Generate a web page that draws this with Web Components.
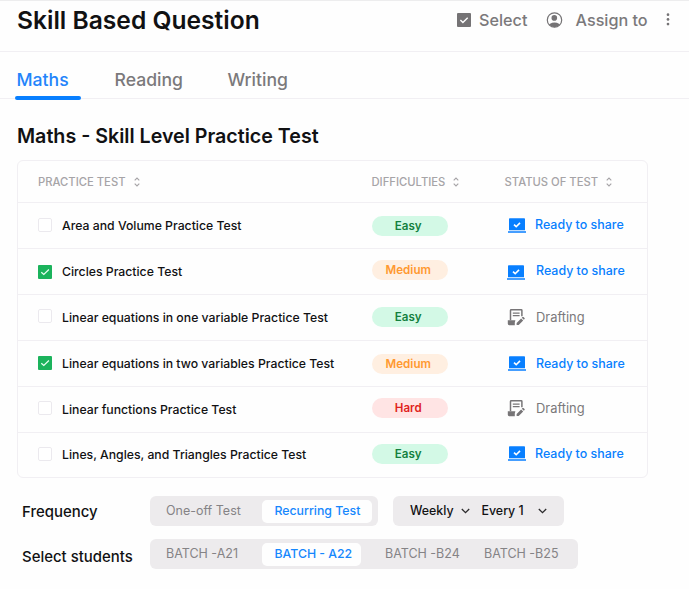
<!DOCTYPE html>
<html lang="en">

<head>
    <meta charset="UTF-8">
    <meta name="viewport" content="width=device-width, initial-scale=1.0">
    <title>Skill Based Question</title>
    <style>
        body {
            margin: 0;
            background: #fefefe;
            color: #111113;
            font-family: Inter, "Liberation Sans", sans-serif;
            --blue: #087fff;
            --grey: #7b797b;
            --line: #f1eff3;
        }
    </style>
</head>

<body>
    <skill-page></skill-page>

    <script>
        const define = (name, html, setup) => {
            customElements.define(name,
                class extends HTMLElement {
                    connectedCallback() {
                        if (this.shadowRoot) return;
                        const shadowRoot = this.attachShadow({ mode: "open" });
                        shadowRoot.innerHTML = html;
                        if (setup) setup(this, shadowRoot);
                    }
                });
        };

        const icons = {
            select: `<svg width="14" height="14" viewBox="0 0 14 14"><rect width="14" height="14" rx="1" fill="#757375"/><path d="M3.4 7.1 5.9 9.5 10.7 4.7" fill="none" stroke="#fff" stroke-width="1.4"/></svg>`,
            user: `<svg width="17" height="16" viewBox="0 0 17 16"><defs><clipPath id="c"><circle cx="8.5" cy="8" r="7.2"/></clipPath></defs><circle cx="8.5" cy="8" r="7.2" fill="none" stroke="#757375" stroke-width="1.2"/><circle cx="8.3" cy="5.9" r="2.8" fill="#757375"/><ellipse cx="8.5" cy="14.2" rx="6.2" ry="3.6" fill="#757375" clip-path="url(#c)"/></svg>`,
            dots: `<svg width="4" height="13" viewBox="0 0 4 13" fill="#757375"><circle cx="2" cy="1.7" r="1.35"/><circle cx="2" cy="6.4" r="1.35"/><circle cx="2" cy="11.1" r="1.35"/></svg>`,
            sort: `<svg width="6" height="10" viewBox="0 0 6 10" fill="none" stroke="#a5a3a6" stroke-width="1.1"><path d="M.7 3.3 3 1 5.3 3.3M.7 6.7 3 9 5.3 6.7"/></svg>`,
            checked: `<svg width="14" height="14" viewBox="0 0 14 14"><rect width="14" height="14" rx="1" fill="#1bb35c"/><path d="M3.3 7.2 5.8 9.5 10.9 4.5" fill="none" stroke="#eafff2" stroke-width="1.2"/></svg>`,
            empty: `<svg width="14" height="14" viewBox="0 0 14 14"><rect x=".5" y=".5" width="13" height="13" rx="1.5" fill="#fff" stroke="#ebe9ee"/></svg>`,
            ready: `<svg width="18" height="15" viewBox="0 0 18 15"><path fill="#087fff" d="M1.8.3h14.4q.8 0 .8.8v11.2H1V1.1q0-.8.8-.8zM0 13.2h18v1.6H0z"/><path d="M6 6.7 8.2 8.7 12 4.9" fill="none" stroke="#fff" stroke-width="1.6"/></svg>`,
            draft: `<svg width="18" height="17" viewBox="0 0 18 17"><path d="M3.5 11.2V1.4q0-.6.6-.6h10.2q.6 0 .6.6v5.8" fill="none" stroke="#777577" stroke-width="1.5"/><path d="M5.8 4.2h6.8M5.8 6.6h6.8" stroke="#777577" stroke-width="1.3"/><path fill="#777577" d="M.8 11.2h7.6l-.6 2.2v2.8H2.2Q.8 16.2.8 14.8zM9.6 14l4.5-4.5 2.1 2.1-4.5 4.5H9.6zM14.8 8.8l.7-.7q.5-.4 1 0l1 1q.5.5 0 1l-.7.7z"/></svg>`,
            chevron: `<svg width="9" height="6" viewBox="0 0 9 6"><path d="M.8 1 4.5 4.6 8.2 1" fill="none" stroke="#2b2a2c" stroke-width="1.3"/></svg>`
        };

        define("ui-icon", `
            <style>
                :host { display: block; flex: none; }
                svg { display: block; }
            </style>
            <span></span>`,
            (host, root) => {
                root.querySelector("span").innerHTML = icons[host.getAttribute("name")];
            });

        define("page-header", `
            <style>
                :host {
                    display: flex;
                    align-items: center;
                    box-sizing: border-box;
                    height: 52px;
                    padding: 0 19px 13px 17px;
                    border-top: 1px solid #ededee;
                    border-bottom: 1px solid var(--line);
                }
                h1 {
                    margin: 0 auto 0 0;
                    font-size: 24.6px;
                    line-height: 30px;
                    font-weight: 600;
                    white-space: nowrap;
                }
                .action {
                    display: flex;
                    align-items: center;
                    color: var(--grey);
                    font-size: 16.2px;
                    font-weight: 500;
                    line-height: 20px;
                    white-space: nowrap;
                    padding-top: 1px;
                }
                .select { width: 89px; gap: 8px; }
                .assign { width: 120px; gap: 12.5px; }
            </style>
            <h1>Skill Based Question</h1>
            <div class="action select"><ui-icon name="select"></ui-icon><span>Select</span></div>
            <div class="action assign"><ui-icon name="user"></ui-icon><span>Assign to</span></div>
            <ui-icon name="dots"></ui-icon>`);

        define("subject-tab", `
            <style>
                :host {
                    display: flex;
                    flex-direction: column;
                    justify-content: space-between;
                    box-sizing: border-box;
                    height: 48px;
                    padding-top: 17px;
                    margin-bottom: -1px;
                    color: var(--grey);
                    font-size: 17.6px;
                    line-height: 22px;
                    font-weight: 450;
                }
                :host([active]) { color: #2384fb; }
                :host([active])::after {
                    content: "";
                    height: 4px;
                    width: 66px;
                    border-radius: 2px;
                    background: #087fff;
                }
                span { padding-left: 1.5px; }
            </style>
            <span><slot></slot></span>`);

        define("subject-tabs", `
            <style>
                :host {
                    display: flex;
                    box-sizing: border-box;
                    height: 47px;
                    padding-left: 15px;
                    border-bottom: 1px solid var(--line);
                }
                .first { width: 98px; }
                .second { width: 113px; }
            </style>
            <subject-tab class="first" active>Maths</subject-tab>
            <subject-tab class="second">Reading</subject-tab>
            <subject-tab>Writing</subject-tab>`);

        define("level-badge", `
            <style>
                :host {
                    display: block;
                    width: 76.5px;
                    border-radius: 10px;
                    font-size: 11.6px;
                    font-weight: 600;
                    line-height: 20px;
                    text-align: center;
                }
                :host([level="Easy"]) { background: #d3f9e6; color: #14803f; }
                :host([level="Medium"]) { background: #ffefe1; color: #ff9930; }
                :host([level="Hard"]) { background: #ffe4e4; color: #e01e20; }
                span { margin-right: 3px; }
            </style>
            <span></span>`,
            (host, root) => {
                root.querySelector("span").textContent = host.getAttribute("level");
            });

        define("test-status", `
            <style>
                :host {
                    display: flex;
                    align-items: center;
                    gap: 9px;
                    font-size: 12.45px;
                    font-weight: 500;
                    line-height: 16px;
                    white-space: nowrap;
                    color: var(--blue);
                }
                :host([state="draft"]) { color: var(--grey); font-size: 12.9px; font-weight: 400; }
            </style>`,
            (host, root) => {
                const state = host.getAttribute("state");
                const icon = document.createElement("ui-icon");
                icon.setAttribute("name", state);
                const label = document.createElement("span");
                label.textContent = state == "ready" ? "Ready to share" : "Drafting";
                root.append(icon, label);
            });

        // n: name, l: level, s: state, and the small shifts of each cell
        const tests = [
            { n: "Area and Volume Practice Test", l: "Easy", s: "ready", box: -1, badge: 1, icon: 0, text: -1, x: 0, gap: 9 },
            { n: "Circles Practice Test", on: true, l: "Medium", s: "ready", box: 1, badge: -3, icon: 1, text: -2, x: -1, gap: 11 },
            { n: "Linear equations in one variable Practice Test", l: "Easy", s: "draft", box: -3, badge: -1, icon: 0, text: 0, x: -1, gap: 11 },
            { n: "Linear equations in two variables Practice Test", on: true, l: "Medium", s: "ready", box: -1, badge: 1, icon: 0, text: 0, x: 0, gap: 10 },
            { n: "Linear functions Practice Test", l: "Hard", s: "draft", box: -3, badge: -3, icon: -2, text: -1, x: -1, gap: 11 },
            { n: "Lines, Angles, and Triangles Practice Test", l: "Easy", s: "ready", box: -2, badge: -2, icon: -4, text: -2, x: 0, gap: 9 }
        ];

        define("test-table", `
            <style>
                :host {
                    display: block;
                    box-sizing: border-box;
                    width: 631px;
                    margin: 11px 0 0 17px;
                    border: 1px solid var(--line);
                    border-radius: 6px;
                }
                .row {
                    display: grid;
                    grid-template-columns: 333.5px 133px 1fr;
                    align-items: center;
                    height: 45px;
                    padding-left: 20px;
                    border-bottom: 1px solid var(--line);
                }
                .row:last-child { height: 44px; border-bottom: none; }
                .head { height: 41px; }
                .head div {
                    display: flex;
                    align-items: center;
                    gap: 8px;
                    color: #a6a4a7;
                    font-size: 11.25px;
                    font-weight: 500;
                    line-height: 14px;
                }
                .name {
                    display: flex;
                    align-items: center;
                    gap: 10px;
                    font-size: 12.25px;
                    font-weight: 500;
                    line-height: 16px;
                    white-space: nowrap;
                }
            </style>
            <div class="row head">
                <div>PRACTICE TEST<ui-icon name="sort"></ui-icon></div>
                <div>DIFFICULTIES<ui-icon name="sort"></ui-icon></div>
                <div>STATUS OF TEST<ui-icon name="sort"></ui-icon></div>
            </div>`,
            (host, root) => {
                tests.forEach((t) => {
                    const row = document.createElement("div");
                    row.className = "row";
                    row.innerHTML = `
                        <div class="name">
                            <ui-icon name="${t.on ? "checked" : "empty"}" style="margin-top:${t.box}px"></ui-icon>
                            <span>${t.n}</span>
                        </div>
                        <level-badge level="${t.l}" style="margin-top:${t.badge}px"></level-badge>
                        <test-status state="${t.s}" style="margin-left:${t.x + 3.5}px;gap:${t.gap}px"></test-status>`;
                    root.appendChild(row);
                    const status = row.querySelector("test-status").shadowRoot;
                    status.querySelector("ui-icon").style.marginTop = t.icon + "px";
                    status.querySelector("span").style.marginTop = t.text + "px";
                });
            });

        define("option-item", `
            <style>
                :host {
                    display: block;
                    box-sizing: border-box;
                    padding: 0 0 1px 12.5px;
                    border-radius: 5px;
                    font-size: 12.5px;
                    font-weight: 400;
                    line-height: 22px;
                    white-space: nowrap;
                    color: #858386;
                }
                :host([active]) {
                    background: #fefefe;
                    color: #1687fd;
                    font-weight: 500;
                    font-size: 12.3px;
                }
            </style>
            <slot></slot>`);

        define("option-group", `
            <style>
                :host {
                    display: flex;
                    align-items: center;
                    box-sizing: border-box;
                    height: 30px;
                    border-radius: 6px;
                    background: #edebed;
                }
            </style>
            <slot></slot>`);

        define("repeat-picker", `
            <style>
                :host {
                    display: flex;
                    align-items: center;
                    box-sizing: border-box;
                    width: 171px;
                    height: 30px;
                    margin: 0 0 1px 15.5px;
                    padding: 1px 0 0 17px;
                    border-radius: 6px;
                    background: #edebed;
                    font-size: 12.4px;
                    font-weight: 500;
                    line-height: 16px;
                    white-space: nowrap;
                }
                .week { width: 51px; }
                .every { width: 56px; margin-left: 11.5px; }
            </style>
            <span class="week">Weekly</span><ui-icon name="chevron"></ui-icon>
            <span class="every">Every 1</span><ui-icon name="chevron"></ui-icon>`);

        define("form-line", `
            <style>
                :host { display: flex; align-items: center; }
                label {
                    width: 128px;
                    padding: 2px 0 0 22px;
                    font-size: 14.95px;
                    font-weight: 450;
                    line-height: 20px;
                    white-space: nowrap;
                }
                :host([low]) label { padding-top: 5px; }
            </style>
            <label></label><slot></slot>`,
            (host, root) => {
                root.querySelector("label").textContent = host.getAttribute("label");
            });

        define("skill-page", `
            <style>
                :host { display: block; width: 689px; height: 589px; overflow: hidden; }
                h2 {
                    margin: 24px 0 0 17px;
                    font-size: 19.65px;
                    line-height: 26px;
                    font-weight: 600;
                }
                form-line { height: 32px; margin-top: 17px; }
                form-line + form-line { margin-top: 11px; }
                .type { width: 227.5px; }
                .type option-item:nth-child(1) { width: 108.5px; margin-left: 3.5px; }
                .type option-item:nth-child(2) { width: 110px; }
                .batch { width: 427.5px; }
                .batch option-item:nth-child(1) { width: 108.5px; margin-left: 3.5px; }
                .batch option-item:nth-child(2) { width: 99px; }
                .batch option-item:nth-child(3) { width: 99px; margin-left: 11.5px; }
            </style>
            <page-header></page-header>
            <subject-tabs></subject-tabs>
            <h2>Maths - Skill Level Practice Test</h2>
            <test-table></test-table>
            <form-line label="Frequency">
                <option-group class="type">
                    <option-item>One-off Test</option-item>
                    <option-item active>Recurring Test</option-item>
                </option-group>
                <repeat-picker></repeat-picker>
            </form-line>
            <form-line label="Select students" low>
                <option-group class="batch">
                    <option-item>BATCH -A21</option-item>
                    <option-item active>BATCH - A22</option-item>
                    <option-item>BATCH -B24</option-item>
                    <option-item>BATCH -B25</option-item>
                </option-group>
            </form-line>`);
    </script>
</body>

</html>
